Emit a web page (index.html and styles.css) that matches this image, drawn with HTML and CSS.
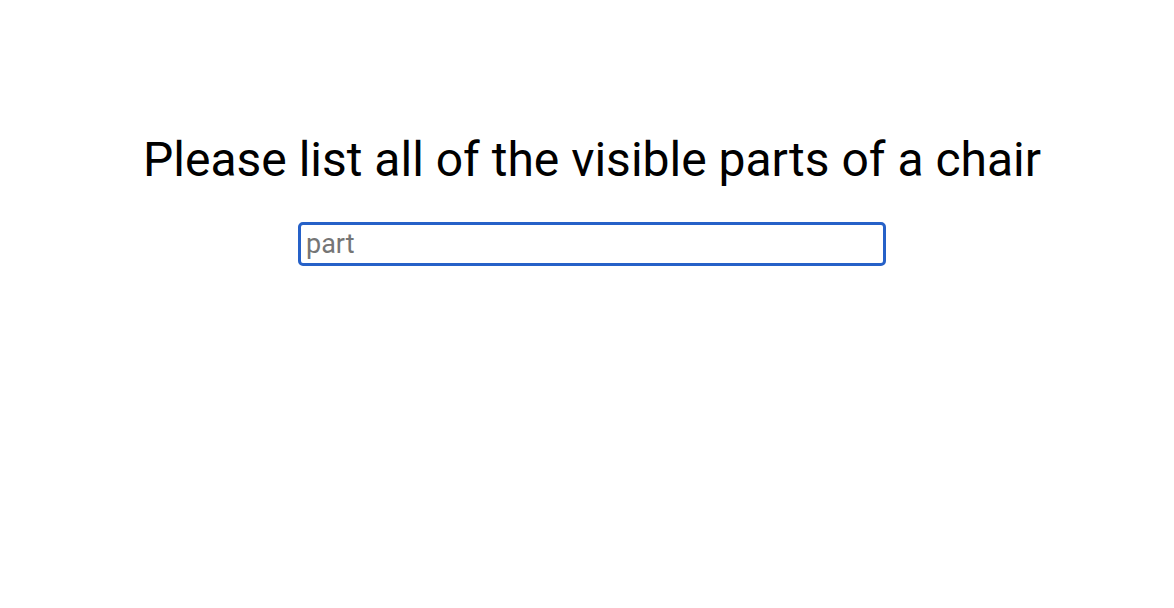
FILE: index.html
```html
<!DOCTYPE html>
<html>
<head>
<meta charset="utf-8">
<link rel="stylesheet" href="styles.css">
</head>
<body>
<main class="page">
  <h1 class="title">Please list all of the visible parts of a chair</h1>
  <input class="part-input" type="text" placeholder="part" autofocus>
</main>
</body>
</html>
```
FILE: styles.css
```css
html, body {
  margin: 0;
  padding: 0;
  background: #ffffff;
}
.page {
  display: flex;
  flex-direction: column;
  align-items: center;
  padding-top: 130px;
  padding-left: 10px;
  font-family: Roboto, "Liberation Sans", sans-serif;
}
.title {
  margin: 0;
  font-size: 48px;
  font-weight: 400;
  line-height: 60px;
  color: #000;
}
.part-input {
  margin-top: 32px;
  box-sizing: border-box;
  width: 588px;
  height: 44px;
  border: 3px solid #2661c8;
  border-radius: 5px;
  padding: 0 5px;
  font-family: Roboto, "Liberation Sans", sans-serif;
  font-size: 27px;
  color: #000;
  outline: none;
}
.part-input::placeholder {
  color: #757575;
}
```
